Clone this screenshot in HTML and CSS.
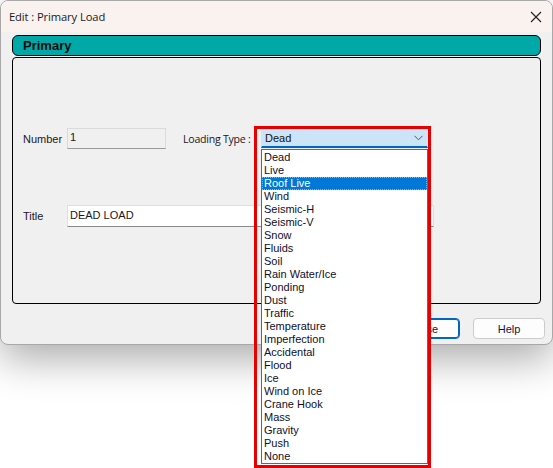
FILE: index.html
```html
<!DOCTYPE html>
<html>
<head>
<meta charset="utf-8">
<link rel="stylesheet" href="styles.css">
</head>
<body>
<div class="stage">
  <div class="window">
    <div class="titlebar">
      <span class="title">Edit : Primary Load</span>
      <svg class="close" width="12" height="12" viewBox="0 0 12 12"><path d="M1 1 L11 11 M11 1 L1 11" stroke="#1f1f1f" stroke-width="1.1" fill="none"/></svg>
    </div>
    <div class="body">
      <div class="header">Primary</div>
      <div class="group">
        <div class="row row-number">
          <span class="label lbl-num">Number</span>
          <div class="field field-num">1</div>
          <span class="label lbl-type">Loading Type :</span>
          <div class="combo">
            <span>Dead</span>
            <svg class="chev" width="9" height="6" viewBox="0 0 9 6"><path d="M0.5 0.8 L4.5 4.8 L8.5 0.8" stroke="#555" stroke-width="1" fill="none"/></svg>
          </div>
        </div>
        <div class="row row-title">
          <span class="label lbl-num">Title</span>
          <div class="field field-title">DEAD LOAD</div>
        </div>
      </div>
      <div class="buttons">
        <div class="btn btn-default">Close</div>
        <div class="btn">Help</div>
      </div>
    </div>
  </div>

  <ul class="dropdown">
    <li>Dead</li>
    <li>Live</li>
    <li class="sel">Roof Live</li>
    <li>Wind</li>
    <li>Seismic-H</li>
    <li>Seismic-V</li>
    <li>Snow</li>
    <li>Fluids</li>
    <li>Soil</li>
    <li>Rain Water/Ice</li>
    <li>Ponding</li>
    <li>Dust</li>
    <li>Traffic</li>
    <li>Temperature</li>
    <li>Imperfection</li>
    <li>Accidental</li>
    <li>Flood</li>
    <li>Ice</li>
    <li>Wind on Ice</li>
    <li>Crane Hook</li>
    <li>Mass</li>
    <li>Gravity</li>
    <li>Push</li>
    <li>None</li>
  </ul>
  <div class="redbox"></div>
</div>
</body>
</html>
```
FILE: styles.css
```css
html, body {
  margin: 0;
  padding: 0;
  background: #ffffff;
}
.stage {
  position: relative;
  width: 553px;
  height: 468px;
  overflow: hidden;
  font-family: "Liberation Sans", Arial, sans-serif;
  font-size: 11px;
  color: #1b1626;
}
.window {
  width: 551px;
  height: 343px;
  border: 1px solid #a8a8a8;
  border-radius: 8px;
  background: #f0f0f0;
  overflow: hidden;
  box-shadow: 0 14px 40px rgba(0,0,0,0.33);
}
.titlebar {
  height: 31px;
  background: #faf2ef;
  display: flex;
  align-items: center;
  justify-content: space-between;
  padding: 0 10px 0 8px;
}
.title {
  font-family: "Open Sans", sans-serif;
  font-size: 11.2px;
  color: #1a1a1a;
  letter-spacing: -0.1px;
}
.close {
  display: block;
}
.body {
  padding: 3px 11px 0 11px;
}
.header {
  height: 19px;
  border: 1px solid #000;
  border-radius: 6px;
  background: #00a8a8;
  font-weight: bold;
  font-size: 13px;
  color: #0a0a0a;
  padding-left: 10px;
  line-height: 19px;
}
.group {
  margin-top: 1px;
  height: 245px;
  border: 1px solid #000;
  border-radius: 4px;
  padding: 0 10px;
}
.row {
  display: flex;
  align-items: center;
}
.row-number {
  margin-top: 70px;
  height: 21px;
}
.row-title {
  margin-top: 56px;
  height: 22px;
}
.label {
  display: block;
  white-space: nowrap;
}
.lbl-num {
  width: 44px;
}
.lbl-type {
  font-family: "Open Sans", sans-serif;
  font-size: 10.6px;
  margin-left: 17px;
  width: 78px;
  letter-spacing: -0.25px;
}
.field {
  box-sizing: border-box;
  padding: 1px 2px 0 2px;
  align-self: stretch;
  display: flex;
  align-items: flex-start;
}
.field-num {
  width: 99px;
  background: #f0f0f0;
  border: 1px solid #dadada;
  border-bottom-color: #9a9a9a;
  padding-top: 2px;
  color: #24123a;
}
.field-title {
  width: 367px;
  background: #ffffff;
  border: 1px solid #e0e0e0;
  border-bottom-color: #8a8a8a;
  padding-top: 3px;
  color: #1b1626;
}
.combo {
  box-sizing: border-box;
  width: 167px;
  height: 20px;
  align-self: flex-start;
  background: #cce4f7;
  border: 1px solid #cce4f7;
  border-bottom: 2px solid #0067c0;
  display: flex;
  align-items: center;
  justify-content: space-between;
  padding: 0 4px 0 3px;
  color: #111;
}
.chev {
  display: block;
}
.buttons {
  display: flex;
  justify-content: flex-end;
  gap: 13px;
  margin-top: 14px;
  margin-right: -4px;
}
.btn {
  box-sizing: border-box;
  width: 72px;
  height: 21px;
  border: 1px solid #cccccc;
  border-radius: 4px;
  background: #fdfdfd;
  display: flex;
  align-items: center;
  justify-content: center;
  color: #14143a;
}
.btn-default {
  border: 1px solid #0067c0;
  box-shadow: inset 0 0 0 1px #0067c0;
}
.dropdown {
  position: absolute;
  left: 261px;
  top: 149px;
  width: 165px;
  height: 312px;
  margin: 0;
  padding: 1px 0 0 0;
  list-style: none;
  background: #fff;
  border: 1px solid #3a6fb5;
  color: #0f0f1f;
  z-index: 5;
}
.dropdown li {
  box-sizing: border-box;
  height: 13px;
  line-height: 13px;
  padding-left: 2px;
  white-space: nowrap;
}
.dropdown li.sel {
  background: #0078d7;
  color: #fff;
  outline: 1px dotted #f0a040;
  outline-offset: -1px;
}
.redbox {
  position: absolute;
  left: 254px;
  top: 126px;
  width: 171px;
  height: 336px;
  border: 3px solid #e80000;
  z-index: 6;
}
```
